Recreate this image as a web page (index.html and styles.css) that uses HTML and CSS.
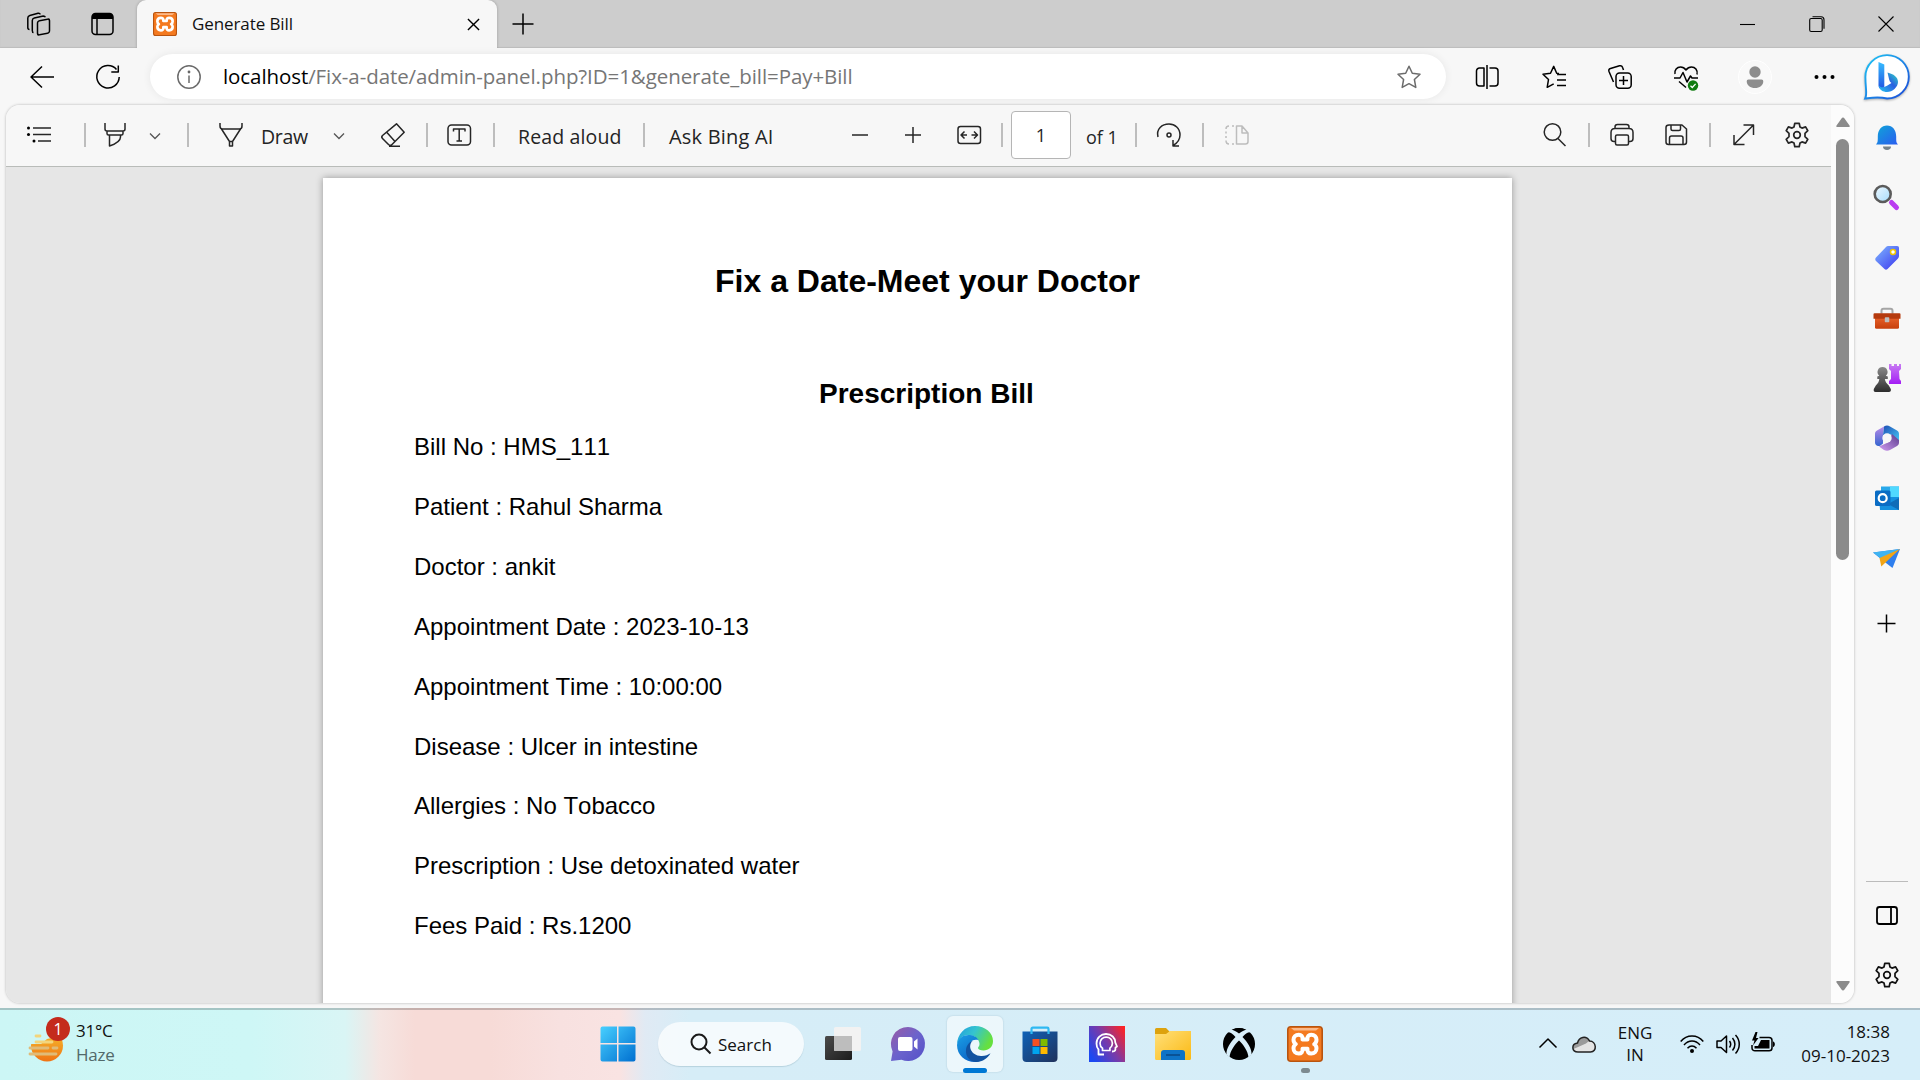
FILE: index.html
```html
<!DOCTYPE html>
<html lang="en">
<head>
<meta charset="utf-8">
<title>Generate Bill</title>
<link rel="stylesheet" href="styles.css">
</head>
<body>
<svg class="defs" aria-hidden="true">
  <defs>
    <linearGradient id="gBell" x1="0" y1="0" x2="1" y2="1"><stop offset="0" stop-color="#0fa5d8"/><stop offset="1" stop-color="#2a5cf0"/></linearGradient>
    <linearGradient id="gPink" x1="0" y1="0" x2="0" y2="1"><stop offset="0" stop-color="#c77bf2"/><stop offset="1" stop-color="#a41df5"/></linearGradient>
    <linearGradient id="gGlass" x1="0" y1="0" x2="1" y2="1"><stop offset="0" stop-color="#eef8ff"/><stop offset="1" stop-color="#a6dcfb"/></linearGradient>
    <linearGradient id="gTag" x1="0" y1="0" x2="1" y2="1"><stop offset="0" stop-color="#7fb8ff"/><stop offset="1" stop-color="#3a34ee"/></linearGradient>
    <linearGradient id="gCase" x1="0" y1="0" x2="0" y2="1"><stop offset="0" stop-color="#e8622b"/><stop offset="1" stop-color="#c63f0c"/></linearGradient>
    <linearGradient id="gPawn" x1="0" y1="0" x2="0" y2="1"><stop offset="0" stop-color="#8a8a8a"/><stop offset="1" stop-color="#2d2d2d"/></linearGradient>
    <linearGradient id="gBing" x1="0" y1="0" x2="1" y2="1"><stop offset="0" stop-color="#1fc8f5"/><stop offset="1" stop-color="#1b48d8"/></linearGradient>
    <linearGradient id="gBingB" x1="0" y1="0" x2="0" y2="1"><stop offset="0" stop-color="#37bdff"/><stop offset="1" stop-color="#1f4fe0"/></linearGradient>
    <linearGradient id="gBingC" x1="1" y1="0" x2="0" y2="1"><stop offset="0" stop-color="#2ee0c4"/><stop offset="0.45" stop-color="#2a5fe0"/><stop offset="1" stop-color="#26c8f0"/></linearGradient>
    <linearGradient id="gWin" x1="0" y1="0" x2="1" y2="1"><stop offset="0" stop-color="#48d0ff"/><stop offset="1" stop-color="#006fd0"/></linearGradient>
    <linearGradient id="gDark" x1="0" y1="0" x2="1" y2="1"><stop offset="0" stop-color="#4b4b4b"/><stop offset="1" stop-color="#1c1c1c"/></linearGradient>
    <linearGradient id="gChat" x1="0" y1="0" x2="1" y2="1"><stop offset="0" stop-color="#9a5ba5"/><stop offset="0.5" stop-color="#6b63cc"/><stop offset="1" stop-color="#5450c8"/></linearGradient>
    <linearGradient id="gEdgeTop" x1="0" y1="0" x2="1" y2="0.4"><stop offset="0" stop-color="#1f9be0"/><stop offset="0.5" stop-color="#35c4cf"/><stop offset="1" stop-color="#66e03f"/></linearGradient>
    <linearGradient id="gEdgeL" x1="0" y1="0" x2="0.6" y2="1"><stop offset="0" stop-color="#1a9fe6"/><stop offset="1" stop-color="#0b62c4"/></linearGradient>
    <linearGradient id="gStore" x1="0" y1="0" x2="1" y2="1"><stop offset="0" stop-color="#0f62b8"/><stop offset="1" stop-color="#20325c"/></linearGradient>
    <linearGradient id="gHead" x1="0" y1="0.75" x2="1" y2="0.1"><stop offset="0" stop-color="#1b48f2"/><stop offset="0.5" stop-color="#7a3aa8"/><stop offset="1" stop-color="#ff2323"/></linearGradient>
    <linearGradient id="gFolder" x1="0" y1="0" x2="1" y2="1"><stop offset="0" stop-color="#ffe07a"/><stop offset="1" stop-color="#fbb914"/></linearGradient>
    <linearGradient id="gSun" x1="0" y1="0" x2="0" y2="1"><stop offset="0" stop-color="#f5c331"/><stop offset="1" stop-color="#f07314"/></linearGradient>
    <linearGradient id="gM1" x1="0" y1="0" x2="0" y2="1"><stop offset="0" stop-color="#b98be8"/><stop offset="1" stop-color="#3565d0"/></linearGradient>
    <linearGradient id="gM2" x1="0" y1="0" x2="1" y2="1"><stop offset="0" stop-color="#1f4fb5"/><stop offset="1" stop-color="#45c6f5"/></linearGradient>
    <linearGradient id="gM3" x1="1" y1="0" x2="0" y2="1"><stop offset="0" stop-color="#5b3b8c"/><stop offset="1" stop-color="#d09cf2"/></linearGradient>
    <symbol id="gear" viewBox="0 0 26 26">
      <g fill="none" stroke="currentColor" stroke-width="1.7" stroke-linejoin="round">
        <path d="M10.8 1.3h4.4l.8 3.7 2 1.1 3.6-1.2 2.2 3.8-2.8 2.6v3.4l2.8 2.6-2.2 3.8-3.6-1.2-2 1.1-.8 3.7h-4.4L10 21l-2-1.100-3.600 1.200-2.200-3.800 2.800-2.600v-3.400L2.200 8.700l2.200-3.800L8 6.100 10 5z"/>
        <circle cx="13" cy="13" r="3.300"/>
      </g>
    </symbol>
    <symbol id="xampp" viewBox="0 0 36 36">
      <rect x=".8" y=".8" width="34.400" height="34.400" rx="3" fill="#f47a20" stroke="#b9540f" stroke-width="1.600"/>
      <path d="M4 2h28l-3 2.500H7z" fill="#fbb98a"/>
      <path d="M15.500 13.500h5C20 10 22 8.700 24.200 8.700c3.300 0 5.300 2.300 5.300 5 0 2-.8 3.500-2.300 4.400 1.500.9 2.300 2.300 2.300 4.200 0 2.900-2 5.200-5.300 5.200-2.500 0-4.200-1.500-3.700-4.800h-5c.5 3.300-1.200 4.800-3.700 4.800-3.300 0-5.300-2.300-5.300-5.200 0-1.900.8-3.300 2.300-4.200-1.500-.9-2.300-2.400-2.300-4.400 0-2.700 2-5 5.300-5 2.200 0 4.200 1.300 3.700 4.800z" fill="none" stroke="#fff" stroke-width="4" stroke-linejoin="round"/>
    </symbol>
    <symbol id="chev" viewBox="0 0 12 8"><path d="M1 1.500l5 5 5-5" fill="none" stroke="currentColor" stroke-width="1.300"/></symbol>
  </defs>
</svg>

<div class="window">
  <header class="titlebar">
    <svg class="i24" viewBox="0 0 24 24"><g class="ln"><rect x="10.500" y="8" width="12" height="14" rx="2" transform="skewY(-12) translate(0 3.500)"/><path d="M6.500 20.500c-1 0-1.200-1-1.200-2V8.500c0-1.500.8-2.200 2-2.500l9-2c1 0 1.700.3 2 1.300M2.500 17.500C1 17.500.8 16.500.8 15.500V6c0-1.500.8-2.300 2-2.600L11 1.200c1.200-.2 2 .2 2.300 1.200"/></g></svg>
    <svg class="i24" viewBox="0 0 24 24"><g class="ln"><rect x="1" y="1.500" width="21" height="21" rx="3.500"/><path d="M6 7v15"/></g><path d="M1 7V5a3.500 3.500 0 0 1 3.500-3.500h14A3.500 3.500 0 0 1 22 5v2z"/></svg>
    <div class="tab">
      <svg class="i24"><use href="#xampp"/></svg>
      <span class="tab-title">Generate Bill</span>
      <svg class="tab-close" viewBox="0 0 14 14"><path class="ln" d="M1 1l12 12M13 1L1 13"/></svg>
    </div>
    <svg class="i22" viewBox="0 0 22 22"><path class="ln" d="M11 .5v21M.5 11h21"/></svg>
    <svg class="i16" viewBox="0 0 16 16"><path class="ln thin" d="M0 8.500h15"/></svg>
    <svg class="i16" viewBox="0 0 16 16"><g class="ln thin"><rect x=".7" y="2.500" width="12.500" height="13" rx="1.500"/><path d="M3.500.7h8.500a3 3 0 0 1 3 3v9"/></g></svg>
    <svg class="i16" viewBox="0 0 16 16"><path class="ln thin" d="M.5.5l15 15M15.500.5l-15 15"/></svg>
  </header>

  <nav class="navbar">
    <svg class="i24" viewBox="0 0 24 24"><path class="ln" d="M24 12H1M12 1.500L1 12l11 10.500"/></svg>
    <svg class="i24" viewBox="0 0 24 24"><path class="ln" d="M20.500 4.500A11.200 11.200 0 1 0 23.200 12M22.300.500v6.500h-7"/></svg>
    <div class="address">
      <svg class="i24" viewBox="0 0 24 24"><g class="ln grey"><circle cx="12" cy="12" r="11.200"/><path d="M12 10.500v7.500"/></g><circle cx="12" cy="7" r="1.400" fill="#666"/></svg>
      <span class="url"><b>localhost</b>/Fix-a-date/admin-panel.php?ID=1&amp;generate_bill=Pay+Bill</span>
      <svg class="i24" viewBox="0 0 24 24"><path class="ln grey" d="M12 1.200l3.300 7 7.700 1-5.600 5.300 1.400 7.900L12 18.700l-6.800 3.700 1.400-7.900L1 9.200l7.700-1z"/></svg>
    </div>
    <svg class="i24" viewBox="0 0 24 24"><g class="ln"><path d="M9 3H4.500A3 3 0 0 0 1.500 6v12a3 3 0 0 0 3 3H9zM14.500 3H20a3 3 0 0 1 3 3v12a3 3 0 0 1-3 3h-5.500"/><path d="M12 0v24"/></g></svg>
    <svg class="i24" viewBox="0 0 24 24"><path class="ln" d="M17 8.500l-2.300-.3-3-6.800-3.200 6.800-7.500 1 5.500 5.300-1.300 7.800 6.500-3.500M15 9.500h9M15 15h9M15 20.500h9"/></svg>
    <svg class="i24" viewBox="0 0 24 24"><g class="ln"><rect x="8" y="8" width="15.200" height="15.200" rx="3.500"/><path d="M15.500 11v9M11 15.500h9M5.500 17L1 6.500C.5 5 1 4 2.500 3.500l9-2.700c1.500-.4 2.500 0 3 1.500L15.500 5"/></g></svg>
    <svg class="i24 over" viewBox="0 0 24 24"><path class="ln" d="M1 9c-.8-4 2-7 5.500-7 2.500 0 4 1 5.500 3 1.500-2 3-3 5.500-3C21 2 24 5 23 9.500M0 13h6l3-5.500 4 9.500 3.500-6 1.500 2h6M5 16.500l7 6"/><circle cx="19" cy="20.500" r="5.200" fill="#107c10"/><path d="M16.500 20.700l1.800 1.800 3.300-3.600" fill="none" stroke="#fff" stroke-width="1.300"/></svg>
    <span class="avatar"><svg class="i24" viewBox="0 0 24 24"><g fill="#8d8d8d"><circle cx="12" cy="7" r="5.700"/><path d="M5.500 14.500h13a1.800 1.800 0 0 1 1.800 2c-.3 4-3.600 6.500-8.300 6.500S4 20.500 3.700 16.500a1.800 1.800 0 0 1 1.800-2z"/></g></svg></span>
    <svg class="i24" viewBox="0 0 24 24"><circle cx="3.500" cy="12" r="2"/><circle cx="11.500" cy="12" r="2"/><circle cx="19.500" cy="12" r="2"/></svg>
    <svg class="bing" viewBox="0 0 46 46"><path d="M1.200 44.500c2.300-5 .2-9 .2-21.500a21.700 21.700 0 1 1 21.700 21.500c-9-2-14-1-21.900 0z" fill="#fff" stroke="url(#gBing)" stroke-width="1.900"/><path d="M14.500 8l5.800 2.500v22l-1.800 3.500c-3-1-4-2.500-4-5z" fill="url(#gBingB)"/><path d="M23.500 18.500c6 1.500 10.500 4.500 10.500 9.500 0 5-5.500 10-11 10-4 0-7.500-2-8.300-6.500 2.500 3 6 1.500 8.300.3l4.500-2.800c-1.500-.8-2-2-2.500-4z" fill="url(#gBingC)"/></svg>
  </nav>

  <div class="middle">
    <main class="viewer">
      <div class="reader">
        <div class="pdfbar">
          <svg class="i24" viewBox="0 0 24 24"><path class="ln ink" d="M6 5h18M6 11.500h18M11 18h13"/><circle cx="1.500" cy="5" r="1.500"/><circle cx="1.500" cy="11.500" r="1.500"/><circle cx="7" cy="18" r="1.500"/></svg>
          <i class="sep"></i>
          <svg class="i24" viewBox="0 0 24 24"><path class="ln ink" d="M1 0v6c0 1.500 1 2 2 2h16c1 0 2-.5 2-2V0M3 8v2.500c0 1 .7 1.500 1.500 1.500h13c.8 0 1.500-.5 1.500-1.500V8M5.500 12v11c6-2 11-5 11-9v-2"/></svg>
          <svg class="chev"><use href="#chev"/></svg>
          <i class="sep"></i>
          <svg class="i24" viewBox="0 0 24 24"><path class="ln ink" d="M1 0v3c0 2 1 3 2.500 3h17C22 6 23 5 23 3V0M2.500 6l8 12.500V23h3v-4.500L21.500 6M10.500 18.500h3"/></svg>
          <span class="tool draw">Draw</span>
          <svg class="chev"><use href="#chev"/></svg>
          <svg class="i24" viewBox="0 0 24 24"><path class="ln ink" d="M15.500.8l7.700 8.400L11 21.500c-1 1-2.500 1-3.500 0L1.500 15.500c-1-1-1-2 0-3zM5.500 9l8.500 9.500M8 23.200h11"/></svg>
          <i class="sep"></i>
          <svg class="i24" viewBox="0 0 24 24"><g class="ln ink"><rect x="1" y="2" width="22.500" height="20" rx="3.500"/><path d="M6.500 8.500V6h11.500v2.500M12.200 6v12M9.500 18h5.500"/></g></svg>
          <i class="sep"></i>
          <span class="tool read">Read aloud</span>
          <i class="sep"></i>
          <span class="tool ask">Ask Bing AI</span>
          <svg class="i18" viewBox="0 0 18 18"><path class="ln ink" d="M1 9h16"/></svg>
          <svg class="i18" viewBox="0 0 18 18"><path class="ln ink" d="M1 9h16M9 1v16"/></svg>
          <svg class="i24" viewBox="0 0 24 24"><g class="ln ink"><rect x="1" y="3.500" width="22.500" height="17" rx="2.500"/><path d="M10 12H4.500M7.500 8.500L4 12l3.500 3.500M14.500 12H20M17 8.500l3.500 3.500-3.500 3.500"/></g></svg>
          <i class="sep"></i>
          <span class="page-input">1</span>
          <span class="tool of">of 1</span>
          <i class="sep"></i>
          <svg class="i24" viewBox="0 0 24 24"><g class="ln ink"><path d="M1 14C-1 6 5 1 12 1c6 0 11 4.500 11 11 0 4-2.500 8-7 10.500M16 17v6h6"/><circle cx="12" cy="12" r="2"/></g></svg>
          <i class="sep"></i>
          <svg class="i24 off" viewBox="0 0 24 24"><path class="ln pale" d="M11.500 3v18h9c1.500 0 2.500-1 2.500-2.500V10l-6-7zM17 3v7h6M9 3H7M4 3c-2 0-3 1-3 3M1 8.500v2M1 13v2M1 17.500C1 20 2 21 4 21M7 21h2"/></svg>
          <svg class="i24" viewBox="0 0 24 24"><g class="ln ink"><circle cx="9.500" cy="9" r="8.300"/><path d="M15 15.500l7.500 7.500"/></g></svg>
          <i class="sep"></i>
          <svg class="i24" viewBox="0 0 24 24"><g class="ln ink"><path d="M5.500 18.500H4c-2 0-3-1-3-3V9.500c0-2.500 1.500-4 4-4h14c2.500 0 4 1.500 4 4v6c0 2-1 3-3 3h-1.500M5 5.500V4c0-1.500 1-2.500 2.500-2.500h9C18 1.500 19 2.500 19 4v1.500"/><rect x="5.500" y="12" width="13" height="10" rx="1.500"/></g></svg>
          <svg class="i24" viewBox="0 0 24 24"><g class="ln ink"><path d="M4 2h13l4.500 4v13c0 1.500-1 2.500-2.500 2.500H3.500C2 21.500 1 20.500 1 19V4.500C1 3 2 2 4 2zM6 2v4c0 1 .6 1.500 1.500 1.500H14c1 0 1.500-.5 1.500-1.500V2M4.500 21.500V15c0-1.200.8-2 2-2h9.500c1.200 0 2 .8 2 2v6.500"/></g></svg>
          <i class="sep"></i>
          <svg class="i24" viewBox="0 0 24 24"><path class="ln ink" d="M2 21.500L21.500 2M11.500 2h10v10M2 12v9.500h10.500"/></svg>
          <svg class="i26 ink-c"><use href="#gear"/></svg>
        </div>
        <div class="canvas">
          <article class="paper">
            <h1>Fix a Date-Meet your Doctor</h1>
            <h2>Prescription Bill</h2>
            <p>Bill No : HMS_111</p>
            <p>Patient : Rahul Sharma</p>
            <p>Doctor : ankit</p>
            <p>Appointment Date : 2023-10-13</p>
            <p>Appointment Time : 10:00:00</p>
            <p>Disease : Ulcer in intestine</p>
            <p>Allergies : No Tobacco</p>
            <p>Prescription : Use detoxinated water</p>
            <p>Fees Paid : Rs.1200</p>
          </article>
        </div>
      </div>
      <div class="scroll">
        <svg class="arrow" viewBox="0 0 14 10"><path d="M7 0.500c.7 0 1 .4 1.500 1L13.500 8.500c.6 1 0 1.500-.8 1.500H1.300C.5 10 0 9.500.5 8.500L5.500 1.500c.5-.6.800-1 1.500-1z"/></svg>
        <div class="thumb"></div>
        <svg class="arrow down" viewBox="0 0 14 10"><path d="M7 9.500c.7 0 1-.4 1.500-1L13.500 1.500c.6-1 0-1.500-.8-1.500H1.300C.5 0 0 .5.500 1.500L5.500 8.500c.5.600.800 1 1.500 1z"/></svg>
      </div>
    </main>

    <aside class="sidebar">
      <svg class="i28" viewBox="0 0 28 28"><path d="M3 20.500c1.800-2 1.800-3 1.800-8C4.800 6 8.500 1.500 14 1.500S23.200 6 23.200 12.500c0 5 0 6 1.800 8z" fill="url(#gBell)"/><path d="M10 22.500h8c0 2-1.500 3.500-4 3.500s-4-1.500-4-3.500z" fill="#75828c"/></svg>
      <svg class="i28" viewBox="0 0 28 28"><circle cx="9.700" cy="10" r="8" fill="url(#gGlass)" stroke="#5b5b5b" stroke-width="2.600"/><path d="M18.500 18.500l5 5" stroke="#b93cf0" stroke-width="5" stroke-linecap="round"/></svg>
      <svg class="i28" viewBox="0 0 28 28"><path d="M15.500 2H24c1.500 0 2 .8 2 2v8c0 1-.3 1.700-1 2.500L14.500 25c-1 1-2 1-3 0L3 17c-1-1-1-2.500 0-3.500L13 3c.8-.8 1.500-1 2.500-1z" fill="url(#gTag)"/><circle cx="20" cy="8" r="2.500" fill="#fff" stroke="#f0c400" stroke-width="1.500"/></svg>
      <svg class="i28" viewBox="0 0 28 28"><g transform="translate(0 .8)"><path d="M8.500 9V6c0-1.200.8-2 2-2h7c1.200 0 2 .8 2 2v3" fill="none" stroke="#a5a5a5" stroke-width="2"/><rect x="2" y="12" width="24" height="12" rx="1.500" fill="url(#gCase)"/><path d="M1.500 8.500h25a1 1 0 0 1 1 1V14H.5V9.500a1 1 0 0 1 1-1z" fill="#b53a0d"/><rect x="11.800" y="12.500" width="4.500" height="5" rx=".8" fill="#bdbdbd"/></g></svg>
      <svg class="i28" viewBox="0 0 28 28"><path d="M16 0h2.500v2H21V0h3v2h2V0h2v5l-2 2 .5 8 1.500 2v3H16v-3l2-2V7l-2-2z" fill="url(#gPink)"/><path d="M9.500 3a5 5 0 0 1 3.300 8.800l2 .7v2.500h-3c.5 3 2 4.500 4 6.500l2 3.500c.4 2-.3 3-1.800 3H2.500C1 28 .4 27 .8 25l2-3.500c2-2 3.200-3.500 3.500-6.500h-2v-2.500l2-.7A5 5 0 0 1 9.500 3z" fill="url(#gPawn)"/></svg>
      <svg class="i28" viewBox="0 0 28 28"><path d="M11 2.500L4 6.500C2.500 7.500 2 8.500 2 10v8.500c0 3 3 4.500 5.500 3l2.500-2V9z" fill="url(#gM1)"/><path d="M11 2.500c2-1.200 4-1.200 6 0l7 4c1.500 1 2 2 2 3.500v7l-8-6.500L10 11z" fill="url(#gM2)"/><path d="M26 16v2.500c0 1.500-.5 2.500-2 3.500l-7 4c-2 1-4 1-6 0l-5-3.500 9-4 4-8.500z" fill="url(#gM3)"/><circle cx="14" cy="14" r="4.700" fill="#f7f7f7"/></svg>
      <svg class="i28" viewBox="0 0 28 28"><path d="M8 2.500h18V14H8z" fill="#28a8ea"/><path d="M17 2.500h9v11h-9z" fill="#50d9ff"/><path d="M6 13h20v13H7z" fill="#1490df"/><path d="M26 14L15 20l11 6z" fill="#0f6cb8"/><rect x="2" y="6.500" width="15.500" height="15.500" rx="1.500" fill="#0a6cc4"/><circle cx="9.700" cy="14.200" r="4" fill="none" stroke="#fff" stroke-width="2.200"/></svg>
      <svg class="i28" viewBox="0 0 28 28"><path d="M0 8.500L27 5l-7.500 19-6.500-5z" fill="#2f7fee"/><path d="M0 8.500L27 5 8 14.500z" fill="#3fb4f0"/><path d="M27 5L6.500 14l1.800 8.500 4.200-4z" fill="#f2a516"/></svg>
      <svg class="i28 plus" viewBox="0 0 28 28"><path class="ln" d="M13.500 4.500v18M4.500 13.500h18"/></svg>
      <hr>
      <svg class="i28" viewBox="0 0 28 28"><g class="ln bold"><rect x="4" y="5" width="20" height="17" rx="2.500"/><path d="M18 5v17"/></g></svg>
      <svg class="i26"><use href="#gear"/></svg>
    </aside>
  </div>
</div>

<footer class="taskbar">
  <div class="weather">
    <svg class="haze" viewBox="0 0 42 46"><circle cx="19" cy="27.500" r="16" fill="url(#gSun)"/><path d="M0 8h36v9L19 21l-6 5H0z" fill="#cdf6f5"/><g stroke-linecap="round" stroke-width="2.800" stroke="#f3d57c"><path d="M8 18h4M8 24h16"/></g><g stroke-linecap="round" stroke-width="2.800" stroke="#e0bb78"><path d="M2 30h18M25 30h4M2 36h26"/></g></svg>
    <span class="badge">1</span>
    <div class="lines"><span>31°C</span><span class="dim">Haze</span></div>
  </div>
  <svg class="i36" viewBox="0 0 36 36"><g fill="url(#gWin)"><path d="M.5 2.500a2 2 0 0 1 2-2H17V17H.5zM18.500.5H33.500a2 2 0 0 1 2 2V17h-17zM.5 18.500H17v17H2.500a2 2 0 0 1-2-2zM18.500 18.500h17v15a2 2 0 0 1-2 2h-15z"/></g></svg>
  <div class="search">
    <svg class="i22" viewBox="0 0 22 22"><g fill="none" stroke="#1a1a1a" stroke-width="2"><circle cx="9" cy="9" r="7.500"/><path d="M14.500 14.500l6 6"/></g></svg>
    <span>Search</span>
  </div>
  <svg class="i36" viewBox="0 0 36 36"><rect y="10" width="27" height="24" rx="1.500" fill="url(#gDark)"/><rect x="9" y="1" width="27" height="24" rx="1.500" fill="#f2f2f2"/><path d="M9 10h18v15H10.500A1.500 1.500 0 0 1 9 23.500z" fill="#bdbdbd"/></svg>
  <svg class="i36" viewBox="0 0 36 36"><path d="M18 1a17 17 0 1 1-6.500 32.700L1 35l1.600-9.600A17 17 0 0 1 18 1z" fill="url(#gChat)"/><rect x="8" y="11" width="14.500" height="14" rx="2" fill="#fff"/><path d="M24 15.500l3.500-3v11L24 20.500z" fill="#fff"/></svg>
  <div class="app active">
    <svg class="i36" viewBox="0 0 36 36"><path d="M0 19C0 8 8 0 18 0c10.500 0 18 7 18 15 0 6-4.500 9.500-9.500 9.500-3 0-5.500-1-5.500-2.500 0-1 1.500-1.500 1.500-4C22.500 13 17 9 11 9 6 9 1.500 13 0 19z" fill="url(#gEdgeTop)"/><path d="M0 19C1 12 6 9 11.500 9c4.500 0 8.500 2 10 5-6-1.500-9.500 2-9.500 8 0 7 5 12 11 13.300-1.500.5-3 .7-5 .7C8 36 0 29 0 19z" fill="url(#gEdgeL)"/><path d="M16 14.500c-6 5-2 15 8 15.500 4 .2 7-1 9.500-2.700C31 32 26 36 19 36 11 35 8.500 29 9 24c.4-4.500 3-8 7-9.500z" fill="#1152a0"/></svg>
    <i class="mark"></i>
  </div>
  <svg class="i36" viewBox="0 0 36 36"><path d="M.5 5.500h35V32a4 4 0 0 1-4 4h-27a4 4 0 0 1-4-4z" fill="url(#gStore)"/><path d="M9.500 8V3c0-.8.500-1.300 1.300-1.300h14.400c.8 0 1.300.5 1.300 1.300v5" fill="none" stroke="#2fb9f2" stroke-width="2.200"/><path d="M10.500 13h7v7h-7z" fill="#f25022"/><path d="M18.500 13h7v7h-7z" fill="#7fba00"/><path d="M10.500 21h7v7h-7z" fill="#00a4ef"/><path d="M18.500 21h7v7h-7z" fill="#ffb900"/></svg>
  <svg class="i36" viewBox="0 0 36 36"><path d="M0 0h36v36H0z" fill="url(#gHead)"/><g fill="none" stroke="#fff" stroke-linejoin="round"><path d="M15 28.500H9.500v-5C8 22 7.500 20 7.500 17.500 7.500 12 12 8 17 8c5.500 0 9.300 3.800 9.300 8.500l1.700 4-1.500 1c0 2.500 0 4-3.500 4" stroke-width="1.800"/><path d="M13.500 24.500v-2.300c-1.700-1.200-2.500-3-2.500-5 0-3.400 2.700-6 6.200-6s6.200 2.600 6.200 6c0 2-.9 3.800-2.500 5v2.300z" stroke-width="1.700"/></g></svg>
  <svg class="i36" viewBox="0 0 36 36"><path d="M0 3.500A1.500 1.500 0 0 1 1.500 2H11l3.500 3.500V9H0z" fill="#dda20d"/><path d="M0 8h11l4-3h21v27.500a1.500 1.500 0 0 1-1.500 1.500h-33A1.500 1.500 0 0 1 0 32.500z" fill="url(#gFolder)"/><path d="M6 34v-7a3 3 0 0 1 3-3h18a3 3 0 0 1 3 3v7z" fill="#0e73c6"/><path d="M11 29h14" stroke="#0b4f90" stroke-width="1.800"/></svg>
  <svg class="i36" viewBox="0 0 36 36"><circle cx="18" cy="18" r="16" fill="#000"/><path d="M8 3.500c3-.5 7 1.500 10 4 3-2.500 7-4.500 10-4l2.500 3c-3-1-6 1-9 4.500 5 5 9.500 11.500 9 17.500l-3 3C27 25 22 18 18 14.500 14 18 9 25 8.500 31.500l-3-3C5 22.500 9.500 16 14.500 11c-3-3.500-6-5.500-9-4.500z" fill="#d8eef9"/><path d="M11 3.700C13 3 15.500 2 18 2s5 1 7 1.700c-2 0-4.500.8-7 2.300-2.500-1.500-5-2.300-7-2.300z"/></svg>
  <div class="app">
    <svg class="i36"><use href="#xampp"/></svg>
    <i class="mark idle"></i>
  </div>
  <svg class="i20" viewBox="0 0 20 20"><path class="ln" d="M1.500 13.500L10 5l8.500 8.500"/></svg>
  <svg class="i24" viewBox="0 0 24 24"><path d="M6 20c-6 0-7-8-.5-9C7 5 14 3 17.500 9c7 0 8 11 1 11z" fill="#e4e4e4"/><path d="M1.500 17C-.5 12 4 10.500 5.500 11 7 5 14 3 17 9l-3 2.500z" fill="#9b9b9b"/><path d="M6 20c-6.500 0-7-8-.5-9C7 5 14 3 17.500 9c7 0 8 11 1 11z" fill="none" stroke="#222" stroke-width="1.500"/></svg>
  <div class="lines mid"><span>ENG</span><span>IN</span></div>
  <svg class="i24" viewBox="0 0 24 24"><path class="ln" d="M.7 9.500c6-7.300 16.600-7.300 22.600 0M4 13c4.500-5.300 11.500-5.300 16 0M7.500 16.300c2.800-3 6.200-3 9 0"/><circle cx="12" cy="19" r="2"/></svg>
  <svg class="i24" viewBox="0 0 24 24"><path class="ln" d="M1 9v6.500h4l5.500 5V4L5 9zM13.500 9c1.500 2 1.500 4.500 0 6.500M16.500 6c3.200 3.700 3.200 9 0 12.500M19.500 3c5 5.500 5 13 0 18.500"/></svg>
  <svg class="i24" viewBox="0 0 24 24"><path class="ln" d="M8.500 5.500H18c1.500 0 3 1 3 3v7.500c0 1.500-1.200 2.800-3 2.800H4c-1.800 0-3-1.200-3-2.800v-3"/><path d="M10 8h8.500v8.500h-15V14H7zM22 9.500c2.500.5 2.500 5 0 5.500zM4.500 0L1 8.500h2.500L2 13.500l5.500-7.500H5L6.500 0z"/></svg>
  <div class="lines end"><span>18:38</span><span>09-10-2023</span></div>
</footer>
</body>
</html>
```
FILE: styles.css
```css
* { box-sizing: border-box; }

body {
  margin: 0;
  width: 1920px;
  height: 1080px;
  overflow: hidden;
  display: flex;
  flex-direction: column;
  background: #f7f7f7;
  color: #111;
  font-family: "Open Sans", "Noto Sans", sans-serif;
}

svg { display: block; overflow: visible; }
.defs { position: absolute; width: 0; height: 0; }
.i16 { width: 16px; height: 16px; }
.i18 { width: 18px; height: 18px; }
.i20 { width: 20px; height: 20px; }
.i22 { width: 22px; height: 22px; }
.i24 { width: 24px; height: 24px; }
.i26 { width: 26px; height: 26px; }
.i28 { width: 28px; height: 28px; }
.i36 { width: 36px; height: 36px; }

.ln { fill: none; stroke: #000; stroke-width: 1.5; stroke-linejoin: round; }
.ln.thin { stroke-width: 1.1; }
.ln.bold { stroke-width: 1.8; }
.ln.grey { stroke: #6b6b6b; }
.ln.ink { stroke: #262626; }
.ln.pale { stroke: #bdbdbd; }
.ink-c { color: #262626; }

.window { height: 1008px; display: flex; flex-direction: column; }

/* title bar */
.titlebar {
  height: 48px;
  padding: 0 0 1px 27px;
  display: grid;
  grid-template-columns: 64px 46px 375px 1228px 69px 69px 20px;
  grid-template-rows: 47px;
  align-items: center;
  background: #cdcdcd;
  box-shadow: inset 0 -1px 1px #bdbdbd;
}
.tab {
  width: 360px;
  height: 48px;
  padding-left: 16px;
  display: grid;
  grid-template-columns: 39px 275px 14px;
  align-items: center;
  align-self: start;
  background: #f7f7f7;
  border-radius: 9px 9px 0 0;
  box-shadow: 0 0 3px rgba(0, 0, 0, .25);
}
.tab-title { font-size: 17px; letter-spacing: -.1px; white-space: nowrap; margin-top: -2px; }
.tab-close { width: 13px; height: 13px; margin-top: 1px; }

/* navigation row */
.navbar {
  height: 57px;
  padding-left: 30px;
  display: grid;
  grid-template-columns: 66px 54px 1325px 67px 66px 66px 64px 75px 51px 46px;
  align-items: center;
  background: #f7f7f7;
}
.address {
  width: 1296px;
  height: 45px;
  padding-left: 27px;
  display: grid;
  grid-template-columns: 47px 1173px 24px;
  align-items: center;
  border-radius: 23px;
  background: #fff;
  box-shadow: 0 0 8px rgba(0, 0, 0, .07);
}
.url { font-size: 20.500px; letter-spacing: -.08px; color: #767676; white-space: nowrap; margin: -2px 0 0 -1px; }
.url b { font-weight: 400; color: #000; }
.avatar {
  width: 34px;
  height: 34px;
  display: grid;
  place-items: center;
  border-radius: 50%;
  background: #f9f9f9;
  border: 1px solid #fff;
}
.bing { width: 46px; height: 46px; filter: drop-shadow(0 1px 1px rgba(0, 0, 0, .3)); }

/* content area */
.middle { height: 903px; display: flex; padding-left: 6px; }
.viewer {
  width: 1848px;
  height: 898px;
  display: flex;
  overflow: hidden;
  border-radius: 14px;
  background: #fcfcfc;
  box-shadow: 0 0 3px rgba(0, 0, 0, .28);
}
.reader { width: 1825px; display: flex; flex-direction: column; }
.pdfbar {
  height: 62px;
  padding: 0 0 2px 21px;
  display: grid;
  grid-template-columns:
    57px 20px 45px 38px 32px 42px 72px 48px 45px 21px 46px 25px
    125px 26px 182px 53px 53px 44px 10px 75px 49px 22px 45px 23px
    318px 45px 22px 55px 44px 23px 52px 27px;
  align-items: center;
  background: #f7f7f7;
  border-bottom: 1px solid #b9bcb9;
}
.sep { width: 2px; height: 24px; background: #bdbdbd; }
.chev { width: 12px; height: 8px; color: #555; margin-top: 3px; }
.tool { font-size: 19.500px; line-height: 26px; color: #242424; white-space: nowrap; margin-top: 5px; }
.draw { letter-spacing: -.3px; }
.read { letter-spacing: .15px; }
.ask { font-size: 20px; letter-spacing: .2px; }
.of { font-size: 18px; margin-top: 4px; }
.page-input {
  width: 60px;
  height: 48px;
  display: grid;
  place-items: center;
  border: 1px solid #b5b5b5;
  border-radius: 4px;
  background: #fff;
  font-size: 18px;
  color: #242424;
}
.canvas { height: 836px; padding: 11px 0 0 317px; overflow: hidden; background: #e6e6e6; }
.paper {
  width: 1189px;
  height: 900px;
  padding: 80px 0 0 91px;
  background: #fff;
  box-shadow: 0 0 7px rgba(0, 0, 0, .35);
  color: #000;
  font-family: "Liberation Sans", Arial, sans-serif;
  font-kerning: none;
}
.paper h1 { margin: 0 0 73px; padding-left: 301px; font-size: 32px; line-height: 46px; }
.paper h2 { margin: 0 0 6px; padding-left: 405px; font-size: 28px; line-height: 34px; }
.paper p { margin: 0; font-size: 24px; line-height: 59.900px; }

.scroll { width: 23px; padding: 12px 5px; display: flex; flex-direction: column; align-items: center; background: #fcfcfc; }
.arrow { width: 14px; height: 10px; fill: #8b8b8b; }
.thumb { width: 13px; height: 421px; margin-top: 12px; border-radius: 7px; background: #8b8b8b; }
.arrow.down { margin-top: auto; }

.sidebar {
  width: 66px;
  padding-top: 19px;
  display: flex;
  flex-direction: column;
  align-items: center;
  gap: 32px;
}
.sidebar .plus { margin-top: 6px; }
.sidebar hr { width: 42px; height: 1px; margin: auto 0 -12px; border: 0; background: #bcbcbc; flex: none; }
.sidebar .i26 { margin-bottom: 20px; }

/* taskbar */
.taskbar {
  height: 72px;
  display: grid;
  grid-template-columns: 600px 58px 167px 65px 57px 75px 67px 66px 66px 56px 261px 34px 46px 62px 36px 35px 25px 114px;
  grid-template-rows: 68px;
  align-items: center;
  border-top: 2px solid rgba(0, 0, 0, .2);
  background: linear-gradient(90deg, #ccf6f5 0, #cef7f6 250px, #d9f5f5 345px, #f5e5e2 380px, #f7dbd7 415px, #f7dbd7 490px, #f8e1e0 560px, #f9e3e2 620px, #e0eaf4 645px, #d6edf7 690px, #d6eef9 1920px);
  background-origin: border-box;
  font-size: 17px;
}
.weather { position: relative; height: 68px; padding: 9px 0 0 76px; }
.haze { position: absolute; left: 28px; top: 8px; width: 42px; height: 46px; }
.badge {
  position: absolute;
  left: 46px;
  top: 7px;
  width: 24px;
  height: 24px;
  border-radius: 50%;
  background: #c42b1c;
  color: #fff;
  line-height: 24px;
  text-align: center;
  font-size: 16px;
}
.lines { display: flex; flex-direction: column; line-height: 24px; }
.weather .lines { letter-spacing: -.2px; }
.dim { color: #52696a; }
.mid { align-items: center; width: 40px; margin-left: -3px; line-height: 22px; }
.end { align-items: flex-end; width: 114px; }
.search {
  width: 146px;
  height: 44px;
  padding-left: 32px;
  display: flex;
  align-items: center;
  gap: 6px;
  border-radius: 22px;
  background: rgba(255, 255, 255, .72);
  box-shadow: 0 1px 1px rgba(0, 60, 80, .15);
}
.app {
  position: relative;
  width: 56px;
  height: 56px;
  display: grid;
  place-items: center;
  border-radius: 6px;
}
.app.active { background: rgba(255, 255, 255, .55); box-shadow: 0 0 2px rgba(0, 60, 80, .2); }
.mark {
  position: absolute;
  left: 16px;
  bottom: -1px;
  width: 24px;
  height: 5px;
  border-radius: 3px;
  background: #0078d4;
}
.mark.idle { left: 24px; width: 9px; background: #7d8a90; }
```
